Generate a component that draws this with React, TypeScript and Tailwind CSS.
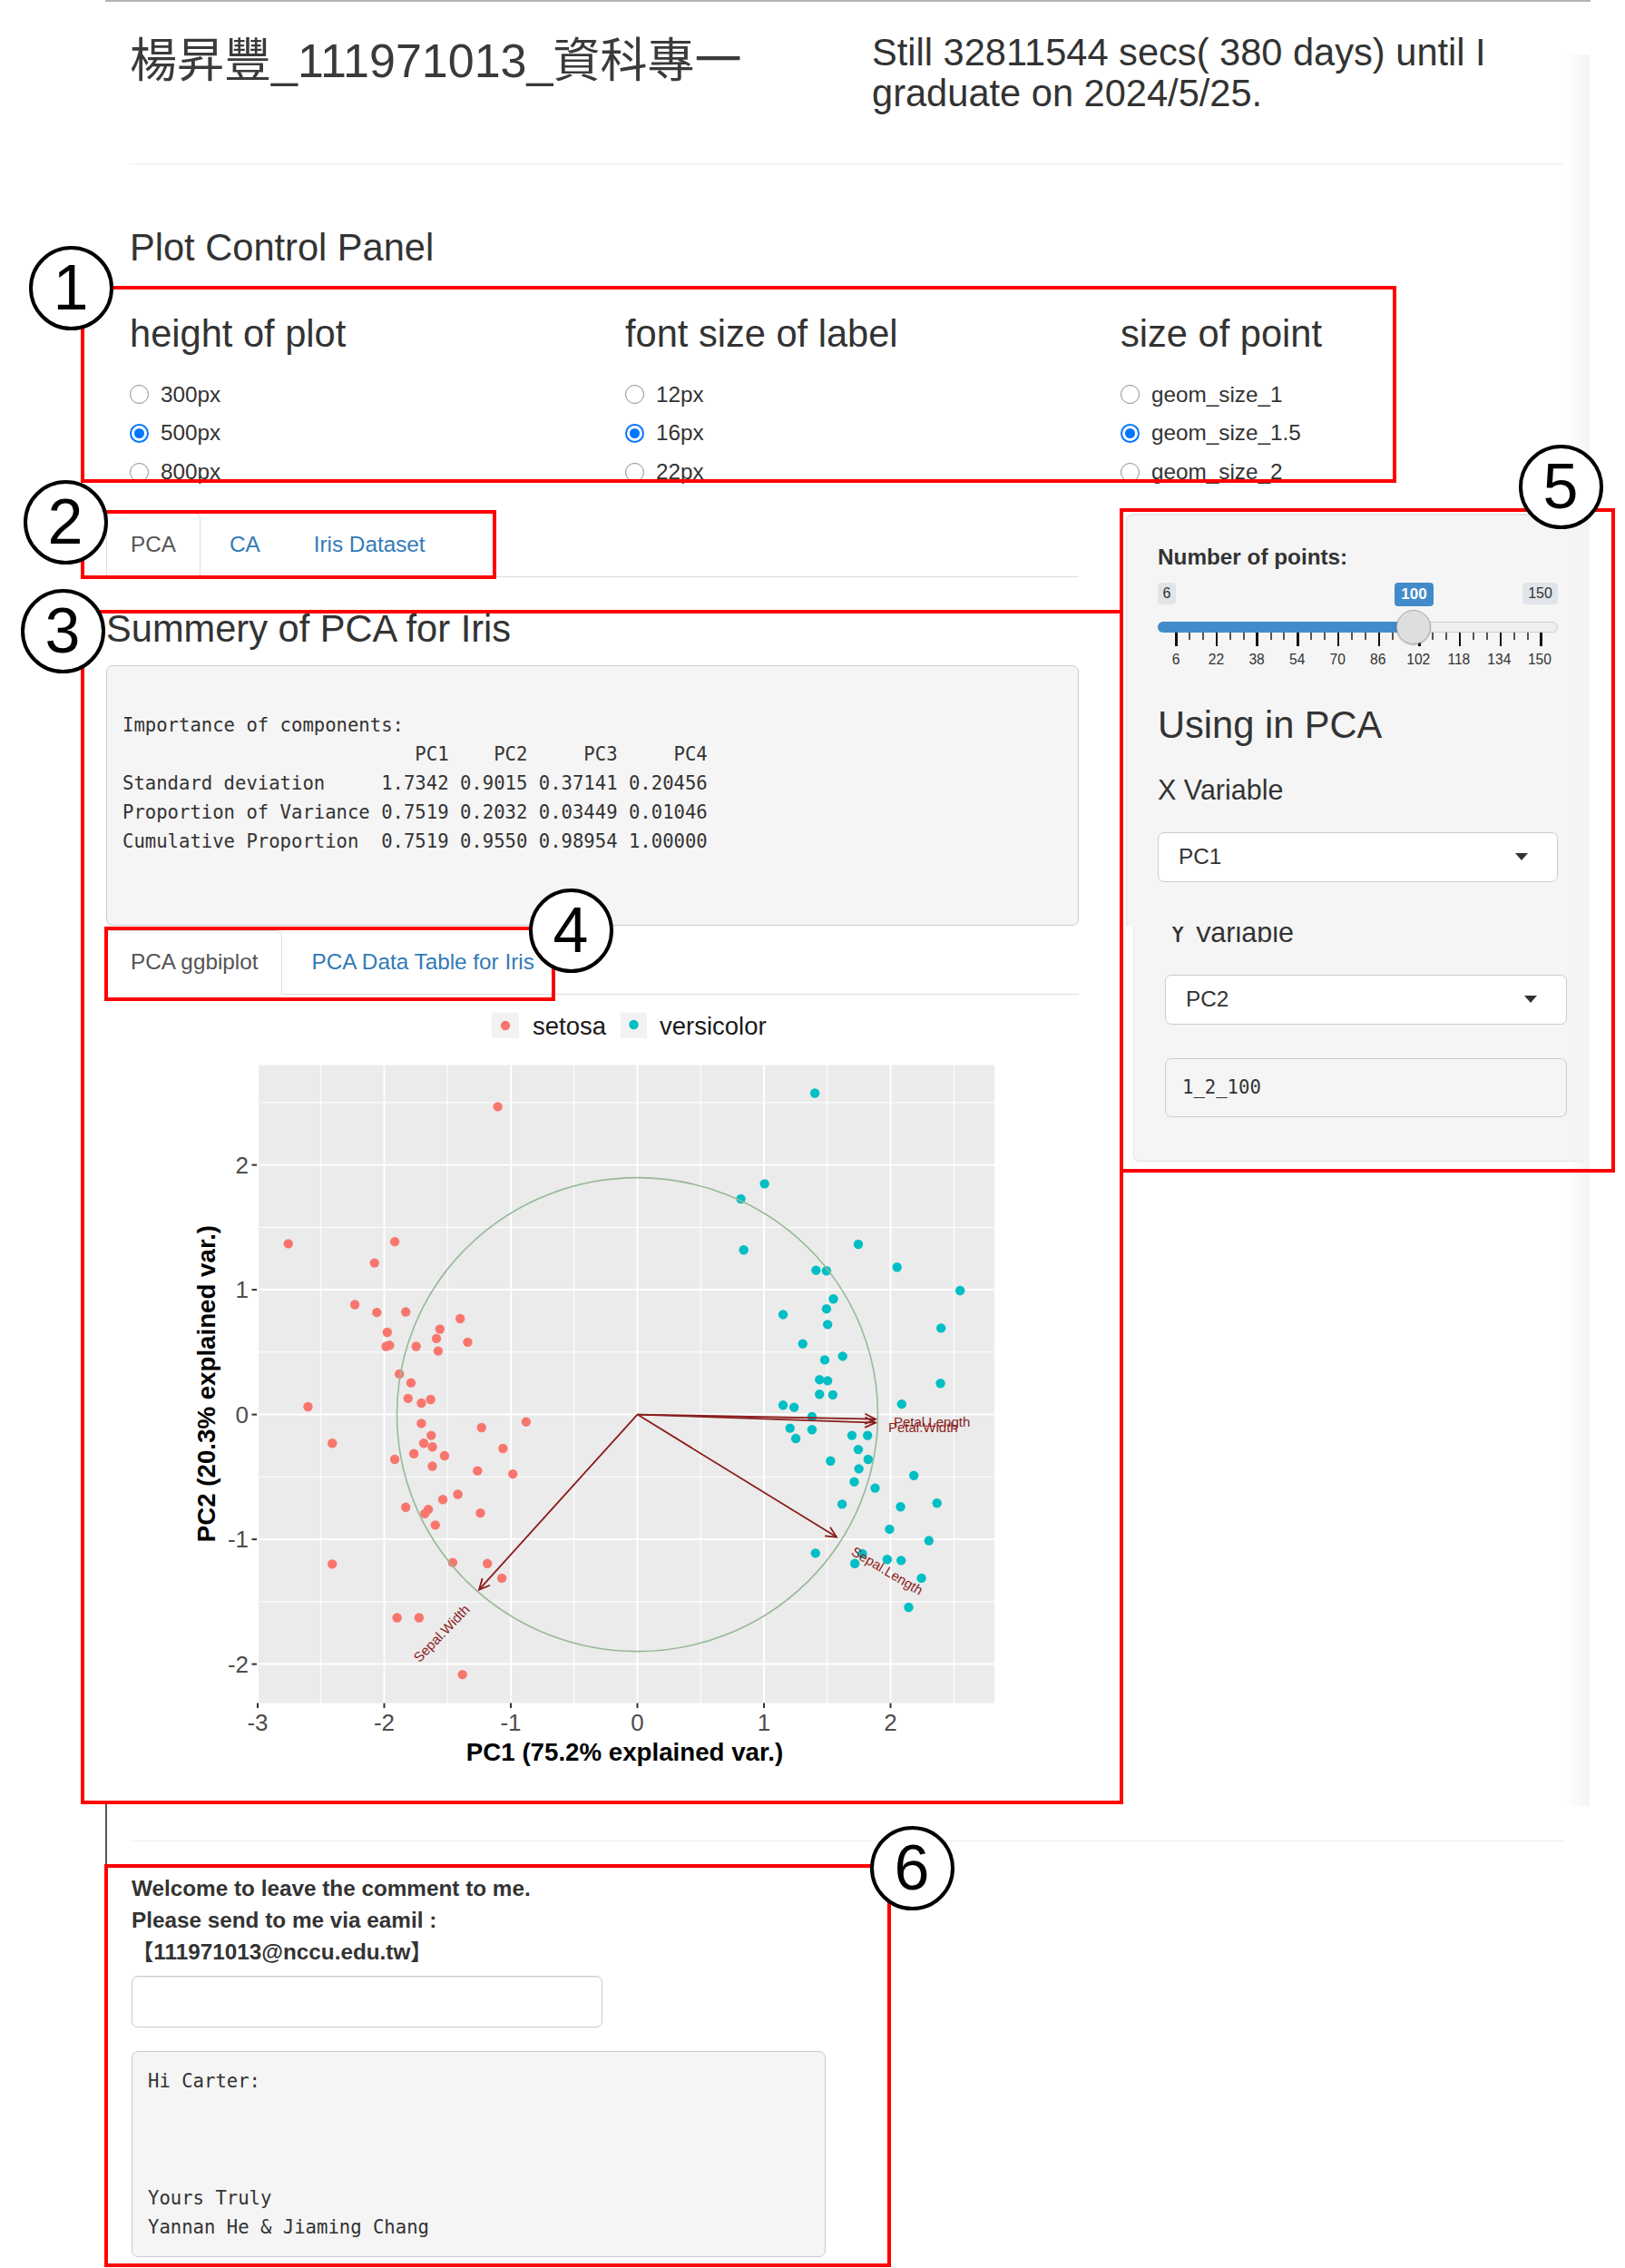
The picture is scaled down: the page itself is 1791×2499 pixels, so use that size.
import React from 'react';

// point positions read off the ggbiplot image (zoomed px), mapped to svg px below
const SETOSA: [number, number][] = [
  [625, 207], [263, 470], [447, 466], [412, 507], [378, 587], [416, 602], [466, 601], [560, 614],
  [525, 634], [434, 640], [519, 652], [573, 659], [432, 667], [438, 665], [484, 667], [522, 676],
  [455, 720], [475, 737], [470, 767], [509, 769], [493, 776], [297, 783], [493, 815], [674, 812],
  [597, 823], [510, 838], [497, 853], [512, 860], [634, 863], [339, 853], [480, 873], [533, 877],
  [447, 884], [512, 897], [590, 906], [651, 912], [556, 951], [530, 961], [466, 976], [505, 980],
  [499, 988], [595, 987], [517, 1010], [339, 1085], [547, 1082], [607, 1084], [632, 1112],
  [451, 1188], [489, 1188], [564, 1297],
];

const VERSICOLOR: [number, number][] = [
  [1173, 181], [1086, 355], [1045, 384], [1050, 482], [1248, 471], [1315, 515], [1424, 560],
  [1175, 521], [1193, 522], [1205, 576], [1193, 595], [1118, 606], [1195, 625], [1391, 632],
  [1152, 662], [1221, 686], [1190, 693], [1181, 731], [1195, 733], [1390, 738], [1181, 759],
  [1204, 760], [1118, 780], [1137, 784], [1323, 778], [1168, 802], [1130, 824], [1168, 827],
  [1140, 844], [1237, 838], [1264, 838], [1248, 865], [1265, 884], [1200, 887], [1249, 902],
  [1344, 915], [1241, 927], [1277, 939], [1384, 968], [1220, 970], [1321, 975], [1302, 1018],
  [1370, 1040], [1174, 1064], [1255, 1065], [1298, 1076], [1322, 1078], [1242, 1084],
  [1357, 1112], [1335, 1168],
];

const zx = (x: number) => 33 + x * 0.6378;
const zy = (y: number) => 4.6 + y * 0.574;
const dx = (d: number) => 585.5 + d * 139.5;
const dy = (d: number) => 462.6 - d * 137.5;

const PANEL = { x: 166, y: 77.6, w: 813, h: 703 };
const RED = '#8b1c1c';

function Arrow({ x2, y2 }: { x2: number; y2: number }) {
  const x1 = dx(0);
  const y1 = dy(0);
  const a = Math.atan2(y2 - y1, x2 - x1);
  const len = 13;
  const p1 = `${x2 - len * Math.cos(a - 0.45)},${y2 - len * Math.sin(a - 0.45)}`;
  const p2 = `${x2 - len * Math.cos(a + 0.45)},${y2 - len * Math.sin(a + 0.45)}`;
  return (
    <g stroke={RED} strokeWidth={1.8} fill="none">
      <line x1={x1} y1={y1} x2={x2} y2={y2} />
      <polyline points={`${p1} ${x2},${y2} ${p2}`} />
    </g>
  );
}

function Biplot() {
  const gridX = [-3, -2.5, -2, -1.5, -1, -0.5, 0, 0.5, 1, 1.5, 2, 2.5];
  const gridY = [2.5, 2, 1.5, 1, 0.5, 0, -0.5, -1, -1.5, -2];
  const bottom = PANEL.y + PANEL.h;
  return (
    <svg width={1072} height={880} className="block">
      {/* legend */}
      <rect x={425} y={19.6} width={30} height={28} fill="#f2f2f2" />
      <circle cx={440} cy={34} r={5.2} fill="#F8766D" />
      <text x={470} y={44} fontSize={27.5} fill="#1a1a1a">setosa</text>
      <rect x={567} y={19.6} width={29} height={28} fill="#f2f2f2" />
      <circle cx={581.5} cy={33} r={5.2} fill="#00BFC4" />
      <text x={610} y={44} fontSize={27.5} fill="#1a1a1a">versicolor</text>

      {/* panel + grid */}
      <rect x={PANEL.x} y={PANEL.y} width={PANEL.w} height={PANEL.h} fill="#EBEBEB" />
      {gridX.map((d) => (
        <line
          key={`gx${d}`}
          x1={dx(d)}
          x2={dx(d)}
          y1={PANEL.y}
          y2={bottom}
          stroke="#fff"
          strokeWidth={Number.isInteger(d) ? 2 : 1}
        />
      ))}
      {gridY.map((d) => (
        <line
          key={`gy${d}`}
          x1={PANEL.x}
          x2={PANEL.x + PANEL.w}
          y1={dy(d)}
          y2={dy(d)}
          stroke="#fff"
          strokeWidth={Number.isInteger(d) ? 2 : 1}
        />
      ))}

      {/* points */}
      {SETOSA.map(([x, y], i) => (
        <circle key={`s${i}`} cx={zx(x)} cy={zy(y)} r={5.2} fill="#F8766D" />
      ))}
      {VERSICOLOR.map(([x, y], i) => (
        <circle key={`v${i}`} cx={zx(x)} cy={zy(y)} r={5.2} fill="#00BFC4" />
      ))}

      {/* correlation circle */}
      <ellipse cx={dx(0)} cy={dy(0)} rx={265} ry={261} fill="none" stroke="#97b997" strokeWidth={1.6} />

      {/* variable arrows */}
      <Arrow x2={848} y2={467.6} />
      <Arrow x2={848} y2={471.6} />
      <Arrow x2={805} y2={597.6} />
      <Arrow x2={411} y2={655.6} />
      <text x={868} y={476} fontSize={15} fill={RED}>Petal.Length</text>
      <text x={862} y={482} fontSize={15} fill={RED}>Petal.Width</text>
      <text x={861} y={634.6} fontSize={15} fill={RED} textAnchor="middle" dominantBaseline="central" transform="rotate(31 861 634.6)">
        Sepal.Length
      </text>
      <text x={369.5} y={703.6} fontSize={15} fill={RED} textAnchor="middle" dominantBaseline="central" transform="rotate(-46 369.5 703.6)">
        Sepal.Width
      </text>

      {/* axes */}
      {[2, 1, 0, -1, -2].map((d) => (
        <g key={`yt${d}`}>
          <line x1={160.5} x2={PANEL.x} y1={dy(d)} y2={dy(d)} stroke="#333" strokeWidth={2} />
          <text x={157} y={dy(d)} dy="0.35em" fontSize={26} fill="#4d4d4d" textAnchor="end">
            {d}
          </text>
        </g>
      ))}
      {[-3, -2, -1, 0, 1, 2].map((d) => (
        <g key={`xt${d}`}>
          <line x1={dx(d)} x2={dx(d)} y1={bottom} y2={bottom + 5.5} stroke="#333" strokeWidth={2} />
          <text x={dx(d)} y={811} fontSize={26} fill="#4d4d4d" textAnchor="middle">
            {d}
          </text>
        </g>
      ))}
      <text x={571.5} y={843.5} fontSize={27.7} fontWeight="bold" fill="#000" textAnchor="middle">
        PC1 (75.2% explained var.)
      </text>
      <text
        x={111}
        y={428.6}
        fontSize={27.7}
        fontWeight="bold"
        fill="#000"
        textAnchor="middle"
        dominantBaseline="central"
        transform="rotate(-90 111 428.6)"
      >
        PC2 (20.3% explained var.)
      </text>
    </svg>
  );
}

function Radio({ label, checked }: { label: string; checked?: boolean }) {
  return (
    <div className="flex h-[34.7px] items-center">
      {checked ? (
        <span className="flex h-[21px] w-[21px] items-center justify-center rounded-full border-2 border-[#0075ff] bg-white">
          <span className="h-[11px] w-[11px] rounded-full bg-[#0075ff]" />
        </span>
      ) : (
        <span className="h-[21px] w-[21px] rounded-full border-[1.5px] border-[#8a8a8a] bg-white" />
      )}
      <span className="ml-[13px] text-[24.3px]">{label}</span>
    </div>
  );
}

function RadioGroup({ title, options, checked }: { title: string; options: string[]; checked: number }) {
  return (
    <div className="w-[546px] shrink-0">
      <h3 className="text-[41.6px] leading-[45.8px]">{title}</h3>
      <div className="mt-[27px] flex flex-col gap-[8px]">
        {options.map((o, i) => (
          <Radio key={o} label={o} checked={i === checked} />
        ))}
      </div>
    </div>
  );
}

function Tabs({ items }: { items: string[] }) {
  return (
    <div className="flex border-b border-[#ddd]">
      {items.map((t, i) => (
        <div
          key={t}
          className={`-mb-px mr-[5px] rounded-t-[7px] border px-[26px] py-[17px] text-[24.3px] leading-[34.7px] ${
            i === 0 ? 'border-[#ddd] border-b-white bg-white text-[#555]' : 'border-transparent text-[#337ab7]'
          }`}
        >
          {t}
        </div>
      ))}
    </div>
  );
}

function Select({ value }: { value: string }) {
  return (
    <div className="flex h-[55px] items-center justify-between rounded-[7px] border border-[#ccc] bg-white pl-[22px] pr-[32px] text-[24.3px]">
      <span>{value}</span>
      <span className="h-0 w-0 border-x-[7px] border-t-[8px] border-x-transparent border-t-[#333]" />
    </div>
  );
}

function Slider() {
  const majors = [6, 22, 38, 54, 70, 86, 102, 118, 134, 150];
  const ticks = Array.from({ length: 28 }, (_, i) => i % 3 === 0);
  return (
    <div className="mt-[9.7px] w-[441px]">
      {/* min / value / max labels */}
      <div className="relative flex h-[26px] items-start justify-between text-[16px]">
        <span className="flex h-[24px] w-[20px] items-center justify-center rounded-[4px] bg-[#e1e4e9]">6</span>
        <span className="absolute left-[261px] top-0 flex h-[26px] w-[43px] items-center justify-center rounded-[4px] bg-[#428bca] text-[17px] font-bold text-white">
          100
        </span>
        <span className="flex h-[24px] w-[39px] items-center justify-center rounded-[4px] bg-[#e1e4e9]">150</span>
      </div>
      {/* track */}
      <div className="relative mt-[17px] h-[12px] rounded-full border border-[#ccc] bg-[#efefef]">
        <div className="-m-px h-[12px] w-[282px] rounded-l-full bg-[#428bca]" />
        <div className="absolute left-[262px] top-[-14px] h-[38px] w-[38px] rounded-full border border-[#aaa] bg-[#dedede] shadow-[0_1px_2px_rgba(0,0,0,0.2)]" />
      </div>
      {/* grid ticks */}
      <div className="ml-[19px] flex w-[405px] items-start justify-between">
        {ticks.map((major, i) => (
          <span key={i} className={major ? 'h-[15px] w-[2.5px] bg-[#111]' : 'h-[8px] w-[2px] bg-[#555]'} />
        ))}
      </div>
      <div className="mt-[5px] flex w-[441px] justify-between">
        {majors.map((m) => (
          <span key={m} className="w-[40px] text-center text-[15.6px] leading-[20px] text-[#333]">
            {m}
          </span>
        ))}
      </div>
    </div>
  );
}

function RedBox({ className }: { className: string }) {
  return <div className={`pointer-events-none absolute border-4 border-[#ff0000] ${className}`} />;
}

function Marker({ n, className }: { n: number; className: string }) {
  return (
    <div
      className={`absolute flex h-[93px] w-[93px] items-center justify-center rounded-full border-4 border-black bg-white text-[70px] leading-none text-black ${className}`}
    >
      {n}
    </div>
  );
}

const SUMMARY = `Importance of components:
                          PC1    PC2     PC3     PC4
Standard deviation     1.7342 0.9015 0.37141 0.20456
Proportion of Variance 0.7519 0.2032 0.03449 0.01046
Cumulative Proportion  0.7519 0.9550 0.98954 1.00000`;

const LETTER = `Hi Carter:



Yours Truly
Yannan He & Jiaming Chang`;

export default function App() {
  return (
    <div className="relative h-[2499px] w-[1791px] overflow-hidden bg-white font-['Liberation_Sans','Noto_Sans_CJK_TC',sans-serif] text-[#333]">
      <div className="ml-[116px] w-[1637px] border-t-2 border-[#b4b4b4]">
        {/* header */}
        <div className="flex h-[178px] pl-[27px]">
          <h2 className="mt-[37px] w-[818px] shrink-0 text-[52px] leading-[56px] text-[#3a3a3a]">楊昇豐_111971013_資科專一</h2>
          <h3 className="mt-[34px] w-[700px] text-[41.6px] leading-[44.5px]">
            Still 32811544 secs( 380 days) until I graduate on 2024/5/25.
          </h3>
        </div>
        <div className="ml-[27px] w-[1581px] border-t border-[#eee]" />

        {/* plot control panel */}
        <h3 className="ml-[27px] mt-[68.5px] text-[41.6px] leading-[45.8px]">Plot Control Panel</h3>
        <div className="mt-[49.4px] flex pl-[27px]">
          <RadioGroup title="height of plot" options={['300px', '500px', '800px']} checked={1} />
          <RadioGroup title="font size of label" options={['12px', '16px', '22px']} checked={1} />
          <RadioGroup title="size of point" options={['geom_size_1', 'geom_size_1.5', 'geom_size_2']} checked={1} />
        </div>

        {/* main + sidebar */}
        <div className="mt-[27.3px] flex items-start pl-px">
          <div className="w-[1072px] shrink-0">
            <Tabs items={['PCA', 'CA', 'Iris Dataset']} />
            <h3 className="mt-[34.8px] text-[41.6px] leading-[45.8px]">Summery of PCA for Iris</h3>
            <pre className="mt-[16.7px] h-[287px] rounded-[7px] border border-[#ccc] bg-[#f5f5f5] px-[17px] pt-[48.7px] font-['DejaVu_Sans_Mono',monospace] text-[20.6px] leading-[32.2px] text-[#333]">
              {SUMMARY}
            </pre>
            <div className="mt-[5px]">
              <Tabs items={['PCA ggbiplot', 'PCA Data Table for Iris']} />
            </div>
            <Biplot />
          </div>

          <div className="ml-[52px] mt-px w-[511px] shrink-0">
            <div className="h-[455px] rounded-t-[7px] border border-b-0 border-[#e3e3e3] bg-[#f5f5f5] px-[34px] pt-[30.6px] shadow-[inset_0_1px_1px_rgba(0,0,0,0.05)]">
              <div className="text-[24.3px] font-bold leading-[34.7px]">Number of points:</div>
              <Slider />
              <h3 className="mt-[39.5px] text-[41.6px] leading-[45.8px]">Using in PCA</h3>
              <div className="mt-[30.7px] text-[30.5px] leading-[34px]">X Variable</div>
              <div className="mt-[30px]">
                <Select value="PC1" />
              </div>
            </div>
            {/* lower half of the sidebar comes from a second capture, slightly offset */}
            <div className="ml-[8px] h-[259px] overflow-hidden rounded-b-[7px] border border-t-0 border-[#e3e3e3] bg-[#f5f5f5] pl-[34px] pr-[24px]">
              <div className="-mt-[11px] ml-[4px] text-[30.5px] leading-[34px]">Y Variable</div>
              <div className="mt-[30px]">
                <Select value="PC2" />
              </div>
              <div className="mt-[37.5px] flex h-[64.5px] items-center rounded-[7px] border border-[#ccc] bg-[#f5f5f5] pl-[18px] font-['DejaVu_Sans_Mono',monospace] text-[20.6px]">
                1_2_100
              </div>
            </div>
          </div>
        </div>

        {/* comment section */}
        <div className="ml-[27px] mt-[52.3px] w-[1582px] border-t border-[#eee]" />
        <div className="ml-[29px] mt-[35.6px]">
          <div className="text-[24.3px] font-bold leading-[34.7px]">
            <div>Welcome to leave the comment to me.</div>
            <div>Please send to me via eamil :</div>
            <div>【111971013@nccu.edu.tw】</div>
          </div>
          <div className="mt-[8.3px] h-[57px] w-[519px] rounded-[7px] border border-[#ccc] bg-white shadow-[inset_0_1px_1px_rgba(0,0,0,0.075)]" />
          <pre className="mt-[26px] h-[227px] w-[765px] rounded-[7px] border border-[#ccc] bg-[#f5f5f5] px-[17px] pt-[16.5px] font-['DejaVu_Sans_Mono',monospace] text-[20.6px] leading-[32.2px] text-[#333]">
            {LETTER}
          </pre>
        </div>
      </div>

      {/* faint page-edge shade and stitch line */}
      <div className="pointer-events-none absolute left-[1726px] top-[60px] h-[1930px] w-[26px] bg-linear-to-r from-white/0 to-[#f4f4f4]" />
      <div className="absolute left-[116px] top-[1988px] h-[72px] w-[2px] bg-[#555]" />

      {/* annotation boxes */}
      <RedBox className="left-[89px] top-[315px] h-[217px] w-[1450px]" />
      <RedBox className="left-[89px] top-[562px] h-[76px] w-[458px]" />
      <RedBox className="left-[89px] top-[672px] h-[1316px] w-[1149px]" />
      <RedBox className="left-[115px] top-[1021px] h-[82px] w-[497px]" />
      <RedBox className="left-[1234px] top-[560px] h-[732px] w-[546px]" />
      <RedBox className="left-[115px] top-[2054px] h-[444px] w-[867px]" />

      <Marker n={1} className="left-[31.5px] top-[270.5px]" />
      <Marker n={2} className="left-[25.5px] top-[528.5px]" />
      <Marker n={3} className="left-[22.5px] top-[648.5px]" />
      <Marker n={4} className="left-[582.5px] top-[978.5px]" />
      <Marker n={5} className="left-[1673.5px] top-[489.5px]" />
      <Marker n={6} className="left-[958.5px] top-[2011.5px]" />
    </div>
  );
}
